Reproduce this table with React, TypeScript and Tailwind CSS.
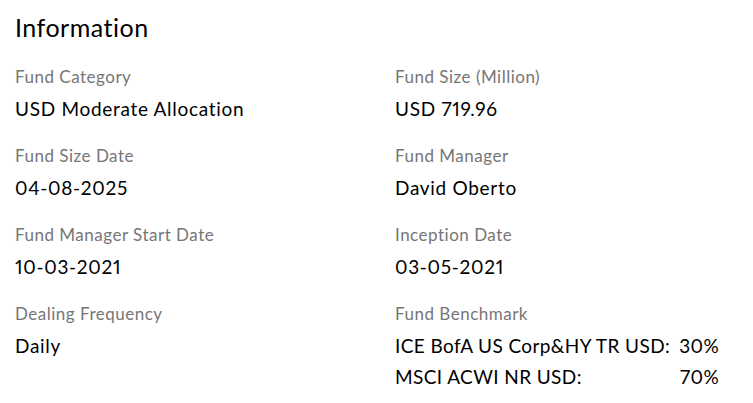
const items = [
  { label: "Fund Category", value: "USD Moderate Allocation" },
  { label: "Fund Size (Million)", value: "USD 719.96" },
  { label: "Fund Size Date", value: "04-08-2025" },
  { label: "Fund Manager", value: "David Oberto" },
  { label: "Fund Manager Start Date", value: "10-03-2021" },
  { label: "Inception Date", value: "03-05-2021" },
  { label: "Dealing Frequency", value: "Daily" },
];

const benchmarks = [
  { name: "ICE BofA US Corp&HY TR USD:", pct: "30%" },
  { name: "MSCI ACWI NR USD:", pct: "70%" },
];

const App = () => {
  return (
    <div className="w-[753px] h-[403px] bg-white px-[15px] pt-[9px] font-['Lato',sans-serif] text-black proportional-nums">
      <h1 className="text-[25px] leading-[36px] tracking-[0.5px] font-normal">
        Information
      </h1>
      <div className="mt-[20px] grid grid-cols-[380px_1fr] gap-y-[23px]">
        {items.map((item) => (
          <div key={item.label}>
            <div className="text-[17px] leading-[24px] tracking-[0.5px] text-[#767676]">
              {item.label}
            </div>
            <div className="mt-[8px] text-[19px] leading-[24px] tracking-[0.7px]">
              {item.value}
            </div>
          </div>
        ))}
        <div>
          <div className="text-[17px] leading-[24px] tracking-[0.5px] text-[#767676]">
            Fund Benchmark
          </div>
          <div className="mt-[8px] grid grid-cols-[auto_auto] w-fit gap-x-[9px] gap-y-[7px] text-[19px] leading-[24px] tracking-[0.4px]">
            {benchmarks.map((b) => (
              <>
                <div key={b.name}>{b.name}</div>
                <div key={b.pct} className="text-right">
                  {b.pct}
                </div>
              </>
            ))}
          </div>
        </div>
      </div>
    </div>
  );
};

export default App;
